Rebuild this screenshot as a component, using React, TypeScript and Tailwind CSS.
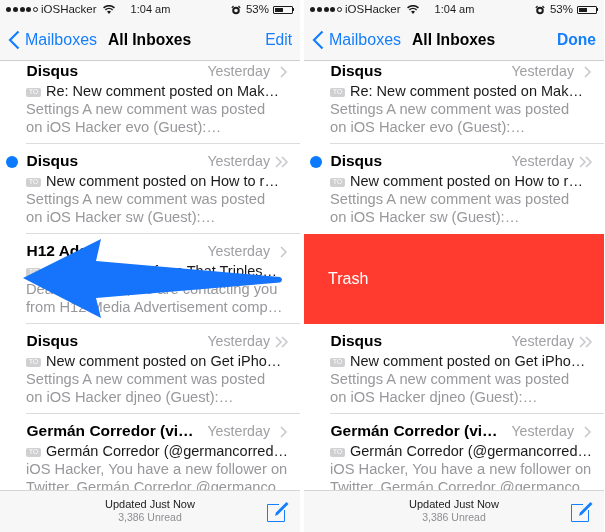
const font = { fontFamily: '"Liberation Sans", Arial, sans-serif' };

type Mail = {
  sender: string;
  subject: string;
  preview: string[];
  unread?: boolean;
  thread?: boolean;
};

const mails: Mail[] = [
  {
    sender: "Disqus",
    subject: "Re: New comment posted on Mak…",
    preview: ["Settings A new comment was posted", "on iOS Hacker evo (Guest):…"],
  },
  {
    sender: "Disqus",
    subject: "New comment posted on How to r…",
    preview: ["Settings A new comment was posted", "on iOS Hacker sw (Guest):…"],
    unread: true,
    thread: true,
  },
  {
    sender: "H12 Ads",
    subject: "Premium Ad Platform That Triples…",
    preview: ["Dear Advertiser, we are contacting you", "from H12 Media Advertisement comp…"],
  },
  {
    sender: "Disqus",
    subject: "New comment posted on Get iPho…",
    preview: ["Settings A new comment was posted", "on iOS Hacker djneo (Guest):…"],
    thread: true,
  },
  {
    sender: "Germán Corredor (vi…",
    subject: "Germán Corredor (@germancorred…",
    preview: ["iOS Hacker, You have a new follower on", "Twitter. Germán Corredor @germanco…"],
  },
];

function Chevron({ double }: { double?: boolean }) {
  return (
    <svg width="16" height="12" viewBox="0 0 16 12" fill="none" stroke="#c7c7cc" strokeWidth="1.5" className="shrink-0">
      {double ? (
        <>
          <path d="M1 1l5 5-5 5" />
          <path d="M7 1l5 5-5 5" />
        </>
      ) : (
        <path d="M6 1l5 5-5 5" />
      )}
    </svg>
  );
}

function Row({ mail, last }: { mail: Mail; last?: boolean }) {
  return (
    <div className="relative h-[90px] pl-[26px]">
      {mail.unread && <div className="absolute left-[6px] top-[12px] h-[12px] w-[12px] rounded-full bg-[#0a7aff]" />}
      <div className={`h-full pr-[15px] pt-[5px] ${last ? "" : "border-b border-[#dcdcdf]"}`}>
        <div className="flex h-[24px] items-center justify-between">
          <span className="ml-[0.5px] whitespace-nowrap text-[15.5px] font-bold text-black">{mail.sender}</span>
          <span className="mt-[2px] flex items-center gap-[5px] whitespace-nowrap text-[14.2px] text-[#a0a0a4]">
            Yesterday
            <span className="-mr-[6px]">
              <Chevron double={mail.thread} />
            </span>
          </span>
        </div>
        <div className="-mr-[6px] flex h-[18px] items-center gap-[5px] whitespace-nowrap text-[14.5px] text-[#1a1a1a]">
          <span className="flex h-[9px] w-[15px] shrink-0 items-center justify-center rounded-[2px] bg-[#d0d0d2] text-[6.5px] text-white">
            TO
          </span>
          {mail.subject}
        </div>
        <div className="-mt-[2px]">
          {mail.preview.map((line) => (
            <div key={line} className="mt-[0.5px] h-[18px] whitespace-nowrap text-[14.7px] leading-[18px] text-[#98989c]">
              {line}
            </div>
          ))}
        </div>
      </div>
    </div>
  );
}

function TrashRow() {
  return (
    <div className="flex h-[90px] items-center bg-[#ff3b30] pl-[24px] text-[16px] text-white">Trash</div>
  );
}

function Phone({ action, actionBold, trash }: { action: string; actionBold?: boolean; trash?: boolean }) {
  return (
    <div className="relative flex h-[532px] w-[300px] shrink-0 flex-col overflow-hidden bg-white">
      <div className="z-10 h-[61px] shrink-0 border-b border-[#cfcfd2] bg-[#f7f7f7]">
        <div className="flex h-[19px] items-center pl-[6px] pr-[6px] text-[11.5px] text-[#1c1c1c]">
          <span className="flex items-center gap-[1.75px]">
            {[0, 1, 2, 3].map((i) => (
              <span key={i} className="h-[5px] w-[5px] rounded-full bg-[#1c1c1c]" />
            ))}
            <span className="h-[5px] w-[5px] rounded-full border border-[#1c1c1c]" />
          </span>
          <span className="ml-[3px]">iOSHacker</span>
          <svg width="12" height="9" viewBox="0 0 12 9" className="ml-[6px]" fill="#1c1c1c">
            <path d="M6 9L4 6.6a3 3 0 0 1 4 0zM2.8 5.4L1.9 4.3a6.2 6.2 0 0 1 8.2 0L9.2 5.4a4.8 4.8 0 0 0-6.4 0zM1.1 3.4L0 2.2a9 9 0 0 1 12 0L10.900 3.400a7.500 7.500 0 0 0-9.800 0z" />
          </svg>
          <span className="ml-[16px] text-[11px]">1:04 am</span>
          <svg width="10" height="10" viewBox="0 0 10 10" className="ml-auto" fill="none" stroke="#1c1c1c">
            <circle cx="5" cy="5.500" r="2.800" strokeWidth="2" />
            <path d="M0.800 2.800L2.500 1M9.200 2.800L7.500 1" strokeWidth="1.200" />
          </svg>
          <span className="ml-[5px]">53%</span>
          <span className="ml-[4px] flex h-[8px] w-[20px] items-center rounded-[1px] border border-[#1c1c1c] p-[1px]">
            <span className="h-full w-[53%] bg-[#1c1c1c]" />
          </span>
          <span className="h-[3px] w-[1px] bg-[#1c1c1c]" />
        </div>
        <div className="flex h-[41px] items-center pl-[8px] pr-[8px]">
          <svg width="12" height="20" viewBox="0 0 12 20" fill="none" stroke="#147efb" strokeWidth="2.2">
            <path d="M10.500 1.500L2 10l8.500 8.500" />
          </svg>
          <span className="ml-[5px] text-[16px] text-[#147efb]">Mailboxes</span>
          <span className="ml-[11px] text-[15.6px] font-bold text-black">All Inboxes</span>
          <span className={`ml-auto text-[15.6px] text-[#147efb] ${actionBold ? "font-bold" : ""}`}>{action}</span>
        </div>
      </div>
      <div className="-mt-[7px] min-h-0 flex-1 overflow-hidden">
        {mails.map((mail, i) =>
          trash && i === 2 ? <TrashRow key={i} /> : <Row key={i} mail={mail} last={(trash && i === 1) || i === 4} />
        )}
      </div>
      <div className="relative z-10 flex h-[42px] shrink-0 flex-col items-center justify-center border-t border-[#d6d6d9] bg-[#f7f7f7] pb-[2px]">
        <span className="text-[11px] leading-[13px] text-[#1c1c1c]">Updated Just Now</span>
        <span className="text-[10.5px] leading-[13px] text-[#8e8e93]">3,386 Unread</span>
        <svg width="24" height="24" viewBox="0 0 24 24" fill="none" className="absolute left-[266px] top-[8px]">
          <path d="M13 5.500H1.500V22.500H18.500V11" stroke="#147efb" strokeWidth="1" />
          <path d="M9 17l1-3.500L20.500 3l2 2L12 15.500z" fill="#147efb" />
        </svg>
      </div>
    </div>
  );
}

export default function App() {
  return (
    <div style={font} className="flex h-[532px] w-[605px] gap-[4px] overflow-hidden bg-white blur-[0.3px]">
      <div className="relative shrink-0">
        <Phone action="Edit" />
        <svg width="300" height="100" viewBox="0 0 300 100" className="absolute left-0 top-[230px]" fill="#1673fb">
          <path d="M23 48L101 9L96 31L280 47Q284 49.500 280 52.500L96 68L101 88Z" />
        </svg>
      </div>
      <Phone action="Done" actionBold trash />
    </div>
  );
}
